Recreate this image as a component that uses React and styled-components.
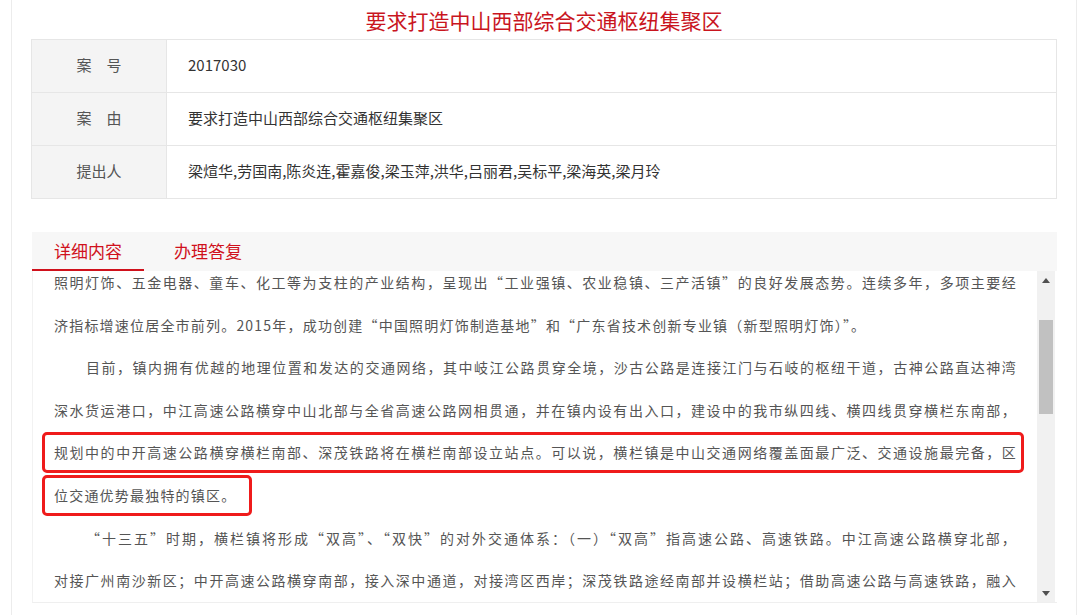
import React from 'react';
import styled, { createGlobalStyle } from 'styled-components';

const GlobalStyle = createGlobalStyle`
  html, body {
    margin: 0;
    padding: 0;
    background: #fff;
  }
  body {
    font-family: "Noto Sans CJK SC", "Microsoft YaHei", sans-serif;
  }
`;

const Page = styled.div`
  width: 1026px;
  height: 615px;
  margin-left: 11px;
  padding: 0 19px;
  border-left: 1px solid #ececec;
  border-right: 1px solid #ececec;
  overflow: hidden;
`;

const Title = styled.h1`
  margin: 0;
  padding-top: 3px;
  height: 36px;
  line-height: 35px;
  text-align: center;
  font-size: 21px;
  font-weight: normal;
  color: #c9151e;
`;

const InfoTable = styled.table`
  width: 100%;
  border-collapse: collapse;
  border: 1px solid #e6e6e6;
  font-size: 15px;
`;

const Row = styled.tr`
  height: 53px;
  border-bottom: 1px solid #e6e6e6;
`;

const Label = styled.td`
  width: 134px;
  padding: 0 0 3px;
  background: #f4f4f4;
  border-right: 1px solid #e6e6e6;
  text-align: center;
  color: #555;
  white-space: pre;
`;

const Value = styled.td`
  padding: 0 0 3px 21px;
  color: #333;
`;

const Section = styled.div`
  margin-top: 33px;
  margin-left: 1px;
`;

const TabBar = styled.div`
  display: flex;
  gap: 8px;
  height: 39px;
  background: #f7f7f7;
`;

const Tab = styled.div`
  padding: 0 22px;
  line-height: 37px;
  font-size: 17px;
  color: #d0111c;
  box-shadow: ${(p) => (p.$active ? 'inset 0 -2px 0 #d0111c' : 'none')};
`;

const Body = styled.div`
  display: flex;
  height: 331px;
  border-left: 1px solid #f2f2f2;
  border-bottom: 1px solid #efefef;
`;

const TextArea = styled.div`
  flex: 1;
  overflow: hidden;
  padding: 0 20px 0 21px;
`;

const Scrolled = styled.div`
  margin-top: -10px;
`;

const Line = styled.div`
  position: relative;
  height: 42.6px;
  line-height: 42.6px;
  font-size: 14px;
  letter-spacing: 1.2px;
  color: #555;
  text-align: justify;
  text-align-last: ${(p) => (p.$full ? 'justify' : 'left')};
  text-indent: ${(p) => (p.$indent ? '32px' : '0')};
`;

const Quote = styled.span`
  font-feature-settings: "fwid";
`;

const Annotation = styled.span`
  position: absolute;
  top: 1px;
  bottom: 1px;
  left: -12px;
  right: ${(p) => (p.$width ? 'auto' : '-7px')};
  width: ${(p) => (p.$width ? `${p.$width}px` : 'auto')};
  border: 3px solid #ef1b1b;
  border-radius: 5px;
  pointer-events: none;
`;

const Scrollbar = styled.div`
  display: flex;
  flex-direction: column;
  width: 18px;
  margin-right: 2px;
  background: #f1f1f1;
`;

const ArrowButton = styled.div`
  display: flex;
  align-items: center;
  justify-content: center;
  height: 18px;
  margin-top: ${(p) => (p.$bottom ? 'auto' : '0')};
`;

const Thumb = styled.div`
  height: 94px;
  margin: ${(p) => p.$offset}px 2px 0;
  background: #c1c1c1;
`;

const Arrow = ({ down }) => (
  <svg width="8" height="5" viewBox="0 0 8 5">
    <path d={down ? 'M0 0 H8 L4 5 Z' : 'M0 5 H8 L4 0 Z'} fill="#505050" />
  </svg>
);

// full-width curly quotes, as the original page's song typeface draws them
const withQuotes = (text) =>
  text.split(/([“”])/).map((part, i) =>
    part === '“' || part === '”' ? <Quote key={i}>{part}</Quote> : part
  );

const info = [
  ['案　号', '2017030'],
  ['案　由', '要求打造中山西部综合交通枢纽集聚区'],
  ['提出人', '梁煊华,劳国南,陈炎连,霍嘉俊,梁玉萍,洪华,吕丽君,吴标平,梁海英,梁月玲'],
];

const lines = [
  { text: '照明灯饰、五金电器、童车、化工等为支柱的产业结构，呈现出“工业强镇、农业稳镇、三产活镇”的良好发展态势。连续多年，多项主要经', full: true },
  { text: '济指标增速位居全市前列。2015年，成功创建“中国照明灯饰制造基地”和“广东省技术创新专业镇（新型照明灯饰）”。' },
  { text: '目前，镇内拥有优越的地理位置和发达的交通网络，其中岐江公路贯穿全境，沙古公路是连接江门与石岐的枢纽干道，古神公路直达神湾', full: true, indent: true },
  { text: '深水货运港口，中江高速公路横穿中山北部与全省高速公路网相贯通，并在镇内设有出入口，建设中的我市纵四线、横四线贯穿横栏东南部，', full: true },
  { text: '规划中的中开高速公路横穿横栏南部、深茂铁路将在横栏南部设立站点。可以说，横栏镇是中山交通网络覆盖面最广泛、交通设施最完备，区', full: true, box: true },
  { text: '位交通优势最独特的镇区。', box: true, boxWidth: 204 },
  { text: '“十三五”时期，横栏镇将形成“双高”、“双快”的对外交通体系：（一）“双高”指高速公路、高速铁路。中江高速公路横穿北部，', full: true, indent: true },
  { text: '对接广州南沙新区；中开高速公路横穿南部，接入深中通道，对接湾区西岸；深茂铁路途经南部并设横栏站；借助高速公路与高速铁路，融入', full: true },
];

export default function App() {
  return (
    <>
      <GlobalStyle />
      <Page>
        <Title>要求打造中山西部综合交通枢纽集聚区</Title>
        <InfoTable>
          <tbody>
            {info.map(([label, value]) => (
              <Row key={label}>
                <Label>{label}</Label>
                <Value>{value}</Value>
              </Row>
            ))}
          </tbody>
        </InfoTable>
        <Section>
          <TabBar>
            <Tab $active>详细内容</Tab>
            <Tab>办理答复</Tab>
          </TabBar>
          <Body>
            <TextArea>
              <Scrolled>
                {lines.map((l, i) => (
                  <Line key={i} $full={l.full} $indent={l.indent}>
                    {withQuotes(l.text)}
                    {l.box && <Annotation $width={l.boxWidth} />}
                  </Line>
                ))}
              </Scrolled>
            </TextArea>
            <Scrollbar>
              <ArrowButton>
                <Arrow />
              </ArrowButton>
              <Thumb $offset={31} />
              <ArrowButton $bottom>
                <Arrow down />
              </ArrowButton>
            </Scrollbar>
          </Body>
        </Section>
      </Page>
    </>
  );
}
